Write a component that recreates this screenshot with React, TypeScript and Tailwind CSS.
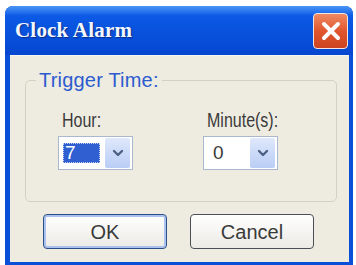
import { X } from "lucide-react";

function Chevron() {
  return (
    <svg width="12" height="8" viewBox="0 0 12 8" fill="none">
      <path d="M2 2l4 4 4-4" stroke="#4d6185" strokeWidth={2.4} strokeLinecap="round" strokeLinejoin="round" />
    </svg>
  );
}

function Combo({ value, focused }: { value: string; focused?: boolean }) {
  return (
    <div className="flex h-[34px] w-[75px] items-center border border-[#a9b8cf] bg-white pr-[2px]">
      {focused ? (
        <div className="ml-[4px] flex h-[20px] w-[37px] items-center border border-dotted border-[#c8d4ee] bg-[#2f5fd0] pl-[1px] text-[19px] leading-[20px] text-white">
          {value}
        </div>
      ) : (
        <div className="ml-[9px] text-[19px] leading-[20px] text-[#3b3b3b]">{value}</div>
      )}
      <div className="ml-auto flex h-[30px] w-[25px] items-center justify-center rounded-[2px] bg-gradient-to-b from-[#dfe8fb] to-[#b9cdf5]">
        <Chevron />
      </div>
    </div>
  );
}

function Label({ text }: { text: string }) {
  return (
    <span className="inline-block origin-left scale-x-[0.8] whitespace-nowrap pl-[5px] text-[20px] leading-[20px] text-[#3a3a3a]">
      {text}
    </span>
  );
}

export default function App() {
  return (
    <div className="h-[265px] w-[356px] overflow-hidden bg-white pl-[5px] pr-[3px] pt-[6px] font-['Liberation_Sans',Arial,sans-serif]">
      <div className="flex h-[259px] flex-col rounded-t-[8px] bg-[#0a4fd8]">
        <div className="flex h-[49px] items-center justify-between rounded-t-[8px] bg-gradient-to-b from-[#4a95f7] via-[#0c5ae6] via-20% to-[#0546cf] pl-[10px] pr-[5px]">
          <span className="font-['Liberation_Serif',serif] text-[21px] font-bold leading-none tracking-[0.2px] text-[#f4f7ff] [text-shadow:1px_1px_1px_#0a2f8a]">
            Clock Alarm
          </span>
          <div className="mt-[1px] flex h-[36px] w-[35px] items-center justify-center rounded-[4px] border-[1.5px] border-[#f3e6e0] bg-gradient-to-b from-[#f08a62] via-[#e0552c] to-[#cc4421]">
            <X size={28} strokeWidth={3.4} color="#ffffff" />
          </div>
        </div>
        <div className="mb-[3px] ml-[5px] mr-[4px] flex-1 border-t border-[#f6f6f0] bg-[#eeece1] pl-[15px] pt-[14px]">
          <fieldset className="w-[312px] rounded-[5px] border border-[#d3d1c1]">
            <legend className="ml-[10px] px-[3px] text-[20px] leading-[20px] tracking-[0.2px] text-[#2c5bcf]">Trigger Time:</legend>
            <div className="flex gap-[70px] pb-[31px] pl-[32px] pt-[20px]">
              <div className="flex flex-col gap-[6px]">
                <Label text="Hour:" />
                <Combo value="7" focused />
              </div>
              <div className="flex flex-col gap-[6px]">
                <Label text="Minute(s):" />
                <Combo value="0" />
              </div>
            </div>
          </fieldset>
          <div className="mt-[12px] flex gap-[23px] pl-[18px]">
            <button className="flex h-[35px] w-[124px] items-center justify-center rounded-[4px] border border-[#2b4f86] bg-gradient-to-b from-[#ffffff] to-[#ebeae4] text-[20px] text-[#3a3a3a] shadow-[inset_0_0_0_2px_#a9c2ee]">
              OK
            </button>
            <button className="flex h-[35px] w-[124px] items-center justify-center rounded-[4px] border border-[#4a4f57] bg-gradient-to-b from-[#ffffff] to-[#ebeae4] text-[20px] text-[#3a3a3a]">
              Cancel
            </button>
          </div>
        </div>
      </div>
    </div>
  );
}
